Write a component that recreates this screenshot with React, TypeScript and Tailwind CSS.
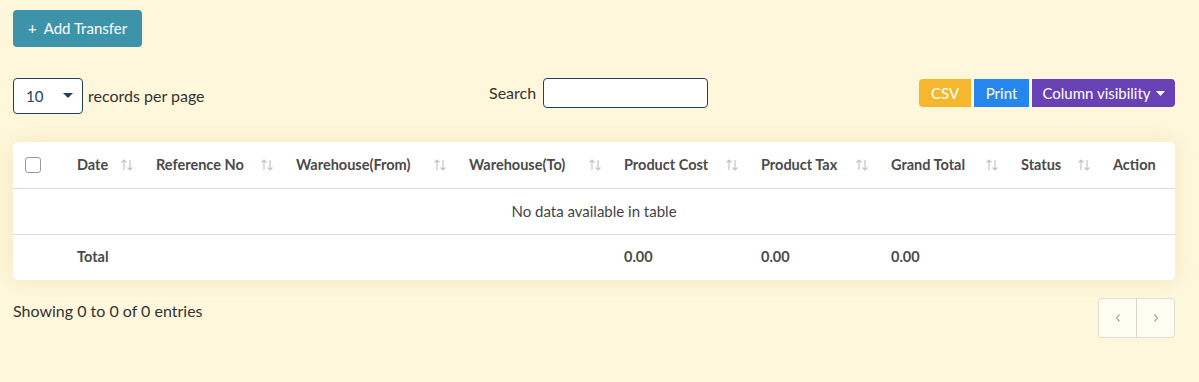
import React from "react";

const SortIcon = () => (
  <svg width="14" height="14" viewBox="0 0 14 14" className="shrink-0 text-[#c4c4c4]">
    <path d="M4 12V2M1.5 4.5L4 2l2.5 2.5" fill="none" stroke="currentColor" strokeWidth="1.2" />
    <path d="M10 2v10M7.5 9.5L10 12l2.5-2.5" fill="none" stroke="currentColor" strokeWidth="1.2" />
  </svg>
);

const columns = [
  { label: "Date", w: "w-[79px]", sort: true },
  { label: "Reference No", w: "w-[140px]", sort: true },
  { label: "Warehouse(From)", w: "w-[173px]", sort: true },
  { label: "Warehouse(To)", w: "w-[155px]", sort: true },
  { label: "Product Cost", w: "w-[137px]", sort: true },
  { label: "Product Tax", w: "w-[130px]", sort: true },
  { label: "Grand Total", w: "w-[130px]", sort: true },
  { label: "Status", w: "w-[92px]", sort: true },
  { label: "Action", w: "w-[74px]", sort: false },
];

export default function App() {
  return (
    <div
      className="min-h-[382px] bg-[#fef7dc] pl-[13px] pr-[24px] pt-[10px] text-[14px] text-[#333]"
      style={{ fontFamily: "Lato, 'Noto Sans', sans-serif" }}
    >
      <button className="flex h-[37px] items-center gap-[7px] rounded-[4px] bg-[#3d93a9] px-[15px] text-[15px] text-white">
        <span className="text-[15px]">+</span>
        <span>Add Transfer</span>
      </button>

      <div className="mt-[31px] flex items-start">
        <div className="flex w-[476px] items-center gap-[5px]">
          <div className="flex h-[36px] w-[70px] items-center justify-between rounded-[4px] border border-[#24405f] bg-white pl-[12px] pr-[9px] text-[15px] text-[#24405f]">
            <span>10</span>
            <svg width="10" height="6" viewBox="0 0 10 6">
              <path d="M0 0h10L5 5z" fill="#24405f" />
            </svg>
          </div>
          <span className="text-[16px] text-[#333]">records per page</span>
        </div>

        <div className="flex items-center gap-[7px]">
          <span className="text-[16px] text-[#333]">Search</span>
          <div className="h-[30px] w-[165px] rounded-[4px] border border-[#24405f] bg-white" />
        </div>

        <div className="ml-auto mt-px flex gap-[3px] text-[15px] text-white">
          <div className="flex h-[28px] w-[52px] items-center justify-center rounded-l-[4px] bg-[#f5b72e]">CSV</div>
          <div className="flex h-[28px] w-[55px] items-center justify-center bg-[#2587ee]">Print</div>
          <div className="flex h-[28px] w-[143px] items-center justify-center gap-[5px] rounded-r-[4px] bg-[#6941b6]">
            <span>Column visibility</span>
            <svg width="9" height="5" viewBox="0 0 9 5">
              <path d="M0 0h9L4.5 5z" fill="#fff" />
            </svg>
          </div>
        </div>
      </div>

      <div className="mt-[28px] overflow-hidden rounded-[5px] bg-white shadow-[0_0_22px_rgba(190,160,60,0.18)]">
        <table className="w-full table-fixed border-collapse">
          <thead>
            <tr className="h-[46px] border-b border-[#dcdbe4]">
              <th className="w-[52px] pl-[12px] text-left">
                <div className="h-[16px] w-[16px] rounded-[3px] border border-[#9a9a9a]" />
              </th>
              {columns.map((c) => (
                <th key={c.label} className={`${c.w} pl-[12px] pr-[10px] text-left`}>
                  <div className="flex items-center justify-between text-[14.5px] font-bold text-[#4a4a4a]">
                    <span className="whitespace-nowrap">{c.label}</span>
                    {c.sort && <SortIcon />}
                  </div>
                </th>
              ))}
            </tr>
          </thead>
          <tbody>
            <tr className="h-[46px] border-b border-[#dcdbe4]">
              <td colSpan={10} className="text-center text-[15px] text-[#444]">
                No data available in table
              </td>
            </tr>
          </tbody>
          <tfoot>
            <tr className="h-[46px] text-[14.5px] font-bold text-[#4a4a4a]">
              <td />
              <td className="pl-[12px]">Total</td>
              <td />
              <td />
              <td />
              <td className="pl-[12px]">0.00</td>
              <td className="pl-[12px]">0.00</td>
              <td className="pl-[12px]">0.00</td>
              <td />
              <td />
            </tr>
          </tfoot>
        </table>
      </div>

      <div className="mt-[18px] flex items-start justify-between">
        <span className="pt-px text-[16px] text-[#333]">Showing 0 to 0 of 0 entries</span>
        <div className="flex h-[40px] w-[77px] overflow-hidden rounded-[4px] border border-[#e0ddd4] bg-[#fffcf1]">
          <div className="flex flex-1 items-center justify-center border-r border-[#d6d4d0]">
            <svg width="8" height="10" viewBox="0 0 8 10">
              <path d="M5.5 1.5L2.5 5l3 3.5" fill="none" stroke="#aaa" strokeWidth="1.2" />
            </svg>
          </div>
          <div className="flex flex-1 items-center justify-center">
            <svg width="8" height="10" viewBox="0 0 8 10">
              <path d="M2.5 1.5L5.5 5l-3 3.5" fill="none" stroke="#aaa" strokeWidth="1.2" />
            </svg>
          </div>
        </div>
      </div>
    </div>
  );
}
